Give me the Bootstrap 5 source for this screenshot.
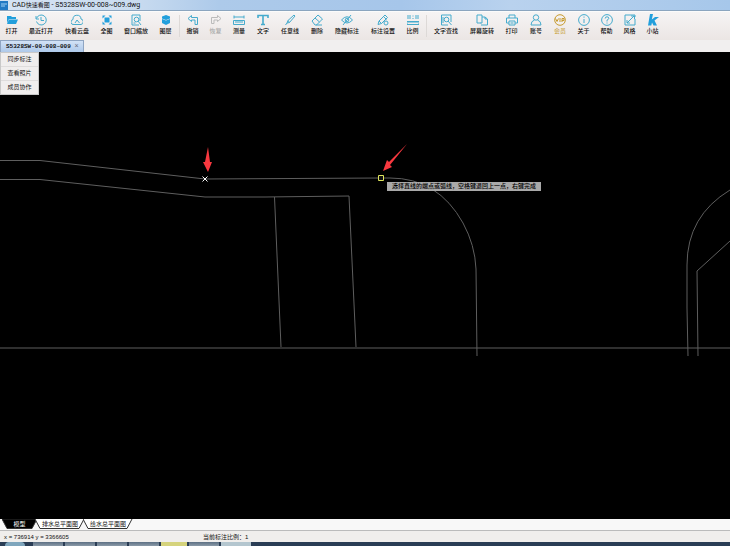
<!DOCTYPE html>
<html lang="zh-CN">
<head>
<meta charset="utf-8">
<meta name="viewport" content="width=device-width, initial-scale=1">
<title>CAD快速看图</title>
<link href="https://cdn.jsdelivr.net/npm/bootstrap@5.3.0/dist/css/bootstrap.min.css" rel="stylesheet">
<style>
body{font-family:"Liberation Sans","Noto Sans CJK SC",sans-serif;font-size:6px;line-height:8px;color:#111;background:#000}
button{border:0;background:none;padding:0;color:inherit;font:inherit;white-space:nowrap}
.titlebar{height:11px;font-family:Roboto,"Noto Sans CJK SC",sans-serif;font-size:7px;line-height:11px;background:linear-gradient(90deg,#d5e3f3 0,#cadcf0 18%,#adcaea 30%,#a6c6ea 55%,#b9d2ee 70%,#a6c7ea 100%);border-bottom:1px solid #8ba5bf}
.titlebar .zh{font-size:6px}
.app-icon{width:8px;height:9px}
.tools{height:29px;background:linear-gradient(#f6f4f4,#ebe6e4);border-top:1px solid #fbfbfb;font-weight:500}
.tool{width:23px;padding-top:2px;flex:none}
.tool.t2{width:24px}
.tool.t3{width:30px}
.tool.t4{width:36px}
.tool svg{width:12px;height:12px;display:block;margin:0 auto 1px;fill:none;stroke:#45abcd;stroke-width:1}
.tool .solid{fill:#229fdc;stroke:none}
.tool.off{color:#aaa}
.tool.off svg{stroke:#bbb}
.tool.vip{color:#cda952}
.tool.vip svg{stroke:#c79b2f}
.sep{width:1px;height:22px;margin:3px 1px 0 2px;background:#ddd9d7;flex:none}
.account{padding-left:1px}
.doc-row{height:12px;background:#f1efef}
.doc-tab{height:12px;padding:0 4px 0 5px;background:linear-gradient(#d2e2f6,#aec9ea);border:1px solid #8fa5c2;border-bottom:0;font-family:"Liberation Mono",monospace;line-height:11px}
.doc-tab .x{color:#667;font-size:7px}
.drawing{background:#000;min-height:0}
.plan{position:absolute;left:0;top:0;width:100%;height:100%;overflow:visible}
.side-menu{position:absolute;left:0;top:0;width:39px;background:#f0eeee;border:1px solid #c9c9c9}
.side-menu button{height:14px;line-height:13px;border-bottom:1px solid #dedcdc;width:100%;display:block}
.side-menu button:last-child{border:0;height:13px}
.hint{position:absolute;left:387px;top:130px;height:9px;line-height:9px;padding:0 5px;background:#a9a9a9;color:#000;white-space:nowrap;font-weight:500}
.sheets{height:11px;background:#f8f8f8;padding-left:2px}
.sheet{position:relative;width:50px;height:10px;line-height:10px;margin-right:-2px}
.sheet.on{width:35px;color:#fff}
.sheet svg{position:absolute;inset:0;width:100%;height:100%;fill:#fff;stroke:#333}
.sheet.on svg{fill:#000}
.sheet span{position:relative}
.status{height:12px;line-height:12px;background:#f0eeec;border-top:1px solid #bbb;padding-left:4px}
.coords{width:199px}
.tasks{height:4px;background:#2a3d55;gap:2px;padding-left:31px}
.tasks i{width:30px;height:4px;background:linear-gradient(#5d7084,#8b9aa8)}
.tasks .start{width:20px;margin:0 6px 0 -26px;border-radius:10px 10px 0 0;background:#7fa6bd}
.tasks .active{width:26px;background:#d5d37c}
.tasks .light{background:#b4c6cf}
</style>
<script src="https://cdn.jsdelivr.net/npm/bootstrap@5.3.0/dist/js/bootstrap.bundle.min.js"></script>
</head>
<body class="vh-100 d-flex flex-column overflow-hidden">
<header class="titlebar d-flex align-items-center flex-shrink-0">
<svg class="app-icon me-1" viewBox="0 0 8 9"><path fill="#2379c4" d="M0 0h8v9H0z"/><path d="M1 3h6M1 5h4" stroke="#9ed0f5"/></svg>
<span class="text-nowrap">CAD<span class="zh">快速看图</span> - S5328SW-00-008~009.dwg</span>
</header>
<nav class="tools d-flex align-items-start flex-shrink-0" aria-label="工具栏">
<button class="tool"><svg viewBox="0 0 12 12"><path class="solid" d="M1 2h4l1 1h4v2H3L1 9zM3 5.500h9L10 10H1z"/></svg>打开</button>
<button class="tool t4"><svg viewBox="0 0 12 12"><path d="M1.500 4.500a5 5 0 1 1 0 3M1 2v3h3M6 3v3.500h3"/></svg>最近打开</button>
<button class="tool t4"><svg viewBox="0 0 12 12"><path d="M3 10.500a2.500 2.500 0 0 1-1-5 4 4 0 0 1 8-.5 2.800 2.800 0 0 1 0 5.500zM4 9l2-3 2.500 3"/></svg>快看云盘</button>
<button class="tool"><svg viewBox="0 0 12 12"><path class="solid" d="M3.500 3.500h5v5h-5zM1.500 1.500h3l-3 3zM10.500 1.500v3l-3-3zM1.500 10.500v-3l3 3zM10.500 10.500h-3l3-3z"/></svg>全图</button>
<button class="tool t4"><svg viewBox="0 0 12 12"><path d="M9 11H2V1h8v6"/><circle cx="6.500" cy="5.500" r="2.300"/><path d="m8 7 3 4M3.500 9h2"/></svg>窗口缩放</button>
<button class="tool"><svg viewBox="0 0 12 12"><path class="solid" d="m6 1 4 1.500v2L6 6 2 4.500v-2zM2 5 6 6.500 10 5v4L6 11 2 9z"/></svg>图层</button>
<span class="sep"></span>
<button class="tool"><svg viewBox="0 0 12 12"><path d="M4.500 1.500 1 4.500l3.500 3V6H8v4.500h2.500v-7h-6z"/></svg>撤销</button>
<button class="tool off"><svg viewBox="0 0 12 12"><path d="M7.500 1.500 11 4.500l-3.500 3V6H4v3.500H1.500v-6h6z"/></svg>恢复</button>
<button class="tool t2"><svg viewBox="0 0 12 12"><path d="M1 3h10M1 1.500v3M11 1.500v3M.5 6.500h11v4H.5zM3 7v2M5 7v2M7 7v2M9 7v2"/></svg>测量</button>
<button class="tool t2"><svg viewBox="0 0 12 12"><path d="M1 4V1.500h10V4M6 2v9M4 10.500h4" stroke-width="1.600"/></svg>文字</button>
<button class="tool t3"><svg viewBox="0 0 12 12"><path d="M10 1 4 6.500 3 9l2.500-.5L11 2zM3 9l-1.500 2M4 6.500l1.500 2"/></svg>任意线</button>
<button class="tool t2"><svg viewBox="0 0 12 12"><path d="m1 7 6-6 4.500 4-6 6H4zM4 4l4.500 4M5 11h6"/></svg>删除</button>
<button class="tool t4"><svg viewBox="0 0 12 12"><path d="M.5 6Q6-.5 11.500 6 6 12 .5 6zM10 1 2 11"/><circle cx="6" cy="6" r="1.800"/></svg>隐藏标注</button>
<button class="tool t4"><svg viewBox="0 0 12 12"><path d="M8 1 2 7l-1 3.500L4.500 9.500l6-6zM6.500 2.500l3 3M2 7l2.500 2.500"/><circle cx="9" cy="9" r="2"/></svg>标注设置</button>
<button class="tool"><svg viewBox="0 0 12 12"><path d="M1 1v4M3 1v4M6 1.500v1M6 4v1M9 1v4M11 1v4M0 7.500h12v3H0zM2 8v1M4 8v1M6 8v1M8 8v1M10 8v1"/></svg>比例</button>
<span class="sep"></span>
<button class="tool t4"><svg viewBox="0 0 12 12"><path d="M11 8V1H1.500v10H8M3 3v6"/><circle cx="6.500" cy="5.500" r="2.300"/><path d="m8 7 3.500 4"/></svg>文字查找</button>
<button class="tool t4"><svg viewBox="0 0 12 12"><path d="M4.500 9H1V1h5v8H4M6 3h3l2.500 2v6H5M9 3v2h2"/></svg>屏幕旋转</button>
<button class="tool"><svg viewBox="0 0 12 12"><path d="M3 4V1h6v3M3 9H.5V4h11v5H9M3 7h6v4H3zM4.500 9h3"/></svg>打印</button>
<div class="account d-flex">
<button class="tool t2"><svg viewBox="0 0 12 12"><circle cx="6" cy="3.500" r="2.700"/><path d="M4.500 6Q1 7 1 11h10q0-4-3.500-5"/></svg>账号</button>
<button class="tool t2 vip"><svg viewBox="0 0 12 12"><circle cx="6" cy="6" r="5.300"/><path d="m1.500 4.500 1.500 3 1.500-3M6 4v4M8 8V4.500h2v2H8"/></svg>会员</button>
<button class="tool"><svg viewBox="0 0 12 12"><circle cx="6" cy="6" r="5.400"/><path d="M6 5v4M6 2.500v1.200"/></svg>关于</button>
<button class="tool"><svg viewBox="0 0 12 12"><circle cx="6" cy="6" r="5.400"/><path d="M4.200 4.500q0-1.700 1.800-1.700t1.800 1.500Q7.800 5.300 6 6.200V7.500M6 8.500v1"/></svg>帮助</button>
<button class="tool"><svg viewBox="0 0 12 12"><path d="M11 3V1H1v10h10V5M3 9l7-7M7 2h3.500v3M3 6v3h3"/></svg>风格</button>
<button class="tool"><svg viewBox="0 0 12 12"><path class="solid" d="M3 0h3L4.800 5.500 8 3h4L7.500 6.500 10 11.500H6.500L5 8.500l-.7 3H1z"/></svg>小站</button>
</div>
</nav>
<div class="doc-row d-flex flex-shrink-0"><button class="doc-tab"><b>S5328SW-00-008~009</b> <span class="x">×</span></button></div>
<main class="drawing position-relative flex-grow-1 overflow-hidden">
<svg class="plan" fill="none" stroke="#5e5e5e" stroke-width="1">
<path d="M0 108.500h40L205 127l175-1h10Q438 126 463 171q12 22 13 46l1 87M0 127.500h40L205 145h60l84-1 7 151M274.500 145l6.500 150M730 138q-43 26-43 75v43l1 48M730 189l-33 30 1 85"/>
<path d="M0 296h5000"/>
<path d="m202.500 124.500 5 5M207.500 124.500l-5 5" stroke="#fff"/>
<path d="M378.500 123.500h5v5h-5z" stroke="#dfe45c" fill="#111"/>
<path d="m208 95 2 15h2l-4 10-5-10h2zM407 92l-17 21 2 2-9 4 4-11 2 2z" fill="#f8383f" stroke="none"/>
</svg>
<div class="side-menu"><button>同步标注</button><button>查看照片</button><button>成员协作</button></div>
<div class="hint">选择直线的端点或弧线，空格键退回上一点，右键完成</div>
</main>
<div class="sheets d-flex flex-shrink-0">
<button class="sheet on"><svg viewBox="0 0 35 10" preserveAspectRatio="none"><path d="M0 0h35l-5 9.500H5z"/></svg><span>模型</span></button>
<button class="sheet"><svg viewBox="0 0 50 10" preserveAspectRatio="none"><path d="m0 0 5 9.500h39L49 0"/></svg><span>排水总平面图</span></button>
<button class="sheet"><svg viewBox="0 0 50 10" preserveAspectRatio="none"><path d="m0 0 5 9.500h39L49 0"/></svg><span>给水总平面图</span></button>
</div>
<footer class="status d-flex flex-shrink-0"><span class="coords">x = 736914 y = 3366605</span><span>当前标注比例：1</span></footer>
<div class="tasks d-flex flex-shrink-0"><i class="start"></i><i></i><i></i><i></i><i></i><i class="active"></i><i></i><i class="light"></i></div>
</body>
</html>
